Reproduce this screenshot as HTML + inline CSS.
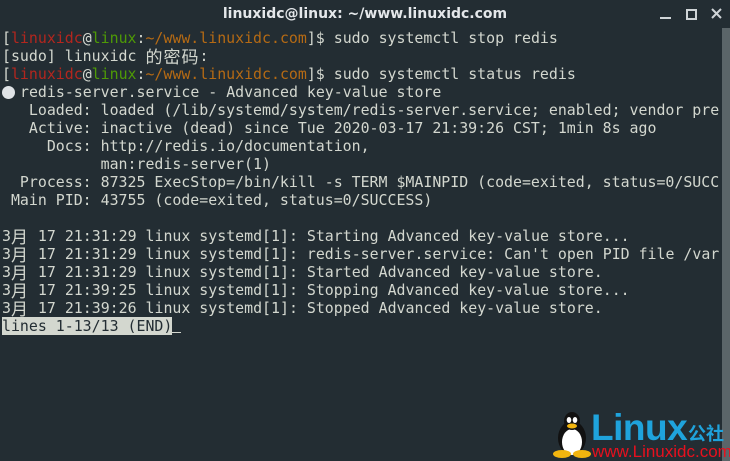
<!DOCTYPE html>
<html><head><meta charset="utf-8">
<style>
html,body{margin:0;padding:0;}
body{width:730px;height:461px;background:#232d33;position:relative;overflow:hidden;font-family:"DejaVu Sans Mono","Liberation Mono","Noto Sans CJK SC",monospace;}
#title{position:absolute;left:0;top:0;width:730px;height:28px;background:#232d33;color:#e4e7ea;font:bold 14px "DejaVu Sans","Liberation Sans",sans-serif;text-align:center;line-height:28px;}
.wb{position:absolute;top:0;height:28px;}
#sb{position:absolute;left:722px;top:28px;width:8px;height:433px;background:#5b6569;}
.l{position:absolute;left:2px;white-space:pre;font-size:14.9px;line-height:18px;height:18px;color:#d3d7cf;overflow:visible;}
.r{color:#b3261e}.g{color:#4e9a06}.o{color:#b56a14}
.w{display:inline-block;width:18px;height:18px;vertical-align:top;text-align:left;font-family:"Noto Sans CJK SC",sans-serif;font-size:17px;line-height:17px;overflow:visible;}
.dot{display:inline-block;width:13px;height:13px;border-radius:50%;background:#dfe3e6;vertical-align:-2px;margin-right:5px;}
.inv{background:#d3d7cf;color:#232d33;}
</style></head><body>
<div id="title">linuxidc@linux: ~/www.linuxidc.com</div>
<svg class="wb" style="left:640px" width="90" height="28">
<rect x="20" y="17" width="11" height="2" fill="#cfd4d7"/>
<rect x="47" y="10" width="9" height="9" fill="none" stroke="#cfd4d7" stroke-width="2"/>
<path d="M72 9 L81 18 M81 9 L72 18" stroke="#cfd4d7" stroke-width="2"/>
</svg>
<div id="sb"></div>
<div class="l" style="top:29px">[<span class="r">linuxidc</span>@<span class="g">linux</span>:<span class="o">~/www.linuxidc.com</span>]$ sudo systemctl stop redis</div>
<div class="l" style="top:47px">[sudo] linuxidc <span class="w">的</span><span class="w">密</span><span class="w">码</span>:</div>
<div class="l" style="top:65px">[<span class="r">linuxidc</span>@<span class="g">linux</span>:<span class="o">~/www.linuxidc.com</span>]$ sudo systemctl status redis</div>
<div class="l" style="top:83px"><span class="dot"></span>redis-server.service - Advanced key-value store</div>
<div class="l" style="top:101px">   Loaded: loaded (/lib/systemd/system/redis-server.service; enabled; vendor pre</div>
<div class="l" style="top:119px">   Active: inactive (dead) since Tue 2020-03-17 21:39:26 CST; 1min 8s ago</div>
<div class="l" style="top:137px">     Docs: http://redis.io/documentation,</div>
<div class="l" style="top:155px">           man:redis-server(1)</div>
<div class="l" style="top:173px">  Process: 87325 ExecStop=/bin/kill -s TERM $MAINPID (code=exited, status=0/SUCC</div>
<div class="l" style="top:191px"> Main PID: 43755 (code=exited, status=0/SUCCESS)</div>
<div class="l" style="top:227px">3<span class="w">月</span> 17 21:31:29 linux systemd[1]: Starting Advanced key-value store...</div>
<div class="l" style="top:245px">3<span class="w">月</span> 17 21:31:29 linux systemd[1]: redis-server.service: Can't open PID file /var</div>
<div class="l" style="top:263px">3<span class="w">月</span> 17 21:31:29 linux systemd[1]: Started Advanced key-value store.</div>
<div class="l" style="top:281px">3<span class="w">月</span> 17 21:39:25 linux systemd[1]: Stopping Advanced key-value store...</div>
<div class="l" style="top:299px">3<span class="w">月</span> 17 21:39:26 linux systemd[1]: Stopped Advanced key-value store.</div>
<div class="l" style="top:317px"><span class="inv">lines 1-13/13 (END)</span><span style="display:inline-block;width:9px;height:1px;background:#d3d7cf;vertical-align:-2px"></span></div>
<svg style="position:absolute;left:552px;top:410px" width="40" height="48">
<ellipse cx="20" cy="28" rx="14" ry="17" fill="#111"/>
<ellipse cx="20" cy="32" rx="10" ry="13" fill="#fff"/>
<ellipse cx="20" cy="11" rx="8" ry="9" fill="#111"/>
<ellipse cx="17" cy="10" rx="2.3" ry="3" fill="#fff"/><ellipse cx="23" cy="10" rx="2.3" ry="3" fill="#fff"/>
<ellipse cx="20" cy="16" rx="5" ry="2.5" fill="#f2b50f"/>
<ellipse cx="10" cy="44" rx="9" ry="4" fill="#f2b50f"/><ellipse cx="30" cy="44" rx="9" ry="4" fill="#f2b50f"/>
</svg>
<div style="position:absolute;left:591px;top:409px;font:bold 37px/37px 'Liberation Sans',sans-serif;color:#1fa3dc;letter-spacing:-0.5px">Linux</div>
<div style="position:absolute;left:688px;top:424px;font:bold 18px/18px 'Noto Sans CJK SC',sans-serif;color:#1fa3dc">公社</div>
<div style="position:absolute;left:592px;top:443px;font:17px/17px 'Liberation Sans',sans-serif;color:#e8101e">www.Linuxidc.com</div>
</body></html>
